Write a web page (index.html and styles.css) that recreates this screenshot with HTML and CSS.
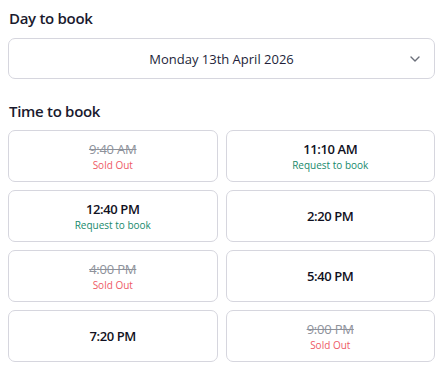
FILE: index.html
```html
<!DOCTYPE html>
<html lang="en">
<head>
<meta charset="utf-8">
<title>Book</title>
<link rel="stylesheet" href="styles.css">
</head>
<body>
<section class="booking">
  <h2 class="label">Day to book</h2>
  <div class="select">
    <span class="select-value">Monday 13th April 2026</span>
    <svg class="chevron" width="10" height="6" viewBox="0 0 10 6"><path d="M1 1l4 4 4-4" fill="none" stroke="#6b6f7a" stroke-width="1.4" stroke-linecap="round" stroke-linejoin="round"/></svg>
  </div>
  <h2 class="label label-time">Time to book</h2>
  <div class="slots">
    <div class="slot sold"><span class="time">9:40 AM</span><span class="note">Sold Out</span></div>
    <div class="slot"><span class="time">11:10 AM</span><span class="note request">Request to book</span></div>
    <div class="slot"><span class="time">12:40 PM</span><span class="note request">Request to book</span></div>
    <div class="slot"><span class="time">2:20 PM</span></div>
    <div class="slot sold"><span class="time">4:00 PM</span><span class="note">Sold Out</span></div>
    <div class="slot"><span class="time">5:40 PM</span></div>
    <div class="slot"><span class="time">7:20 PM</span></div>
    <div class="slot sold"><span class="time">9:00 PM</span><span class="note">Sold Out</span></div>
  </div>
</section>
</body>
</html>
```
FILE: styles.css
```css
* { box-sizing: border-box; }
body {
  margin: 8px;
  background: #ffffff;
  font-family: "Open Sans", "Noto Sans", sans-serif;
  color: #14142b;
}
.label {
  margin: 0 0 10px 1px;
  font-size: 15px;
  line-height: 20px;
  font-weight: 600;
  letter-spacing: -0.3px;
  color: #1a1a2e;
}
.label-time {
  margin-top: 22px;
  margin-bottom: 9px;
}
.select {
  position: relative;
  height: 41px;
  border: 1px solid #d6d6de;
  border-radius: 7px;
  display: flex;
  align-items: center;
  justify-content: center;
}
.select-value {
  font-size: 13px;
  color: #231f3a;
}
.chevron {
  position: absolute;
  right: 14px;
  top: 17px;
}
.slots {
  display: grid;
  grid-template-columns: 1fr 1fr;
  gap: 8px;
}
.slot {
  height: 52px;
  border: 1px solid #d6d6de;
  border-radius: 7px;
  display: flex;
  flex-direction: column;
  align-items: center;
  justify-content: center;
  gap: 2px;
}
.time {
  font-size: 13px;
  line-height: 16px;
  font-weight: 600;
  letter-spacing: -0.4px;
  color: #111122;
}
.note {
  font-size: 10px;
  line-height: 13px;
  color: #ee5a66;
}
.note.request { color: #178a6c; }
.sold .time {
  color: #8e929b;
  font-weight: 400;
  letter-spacing: -0.2px;
  text-decoration: line-through;
}
```
